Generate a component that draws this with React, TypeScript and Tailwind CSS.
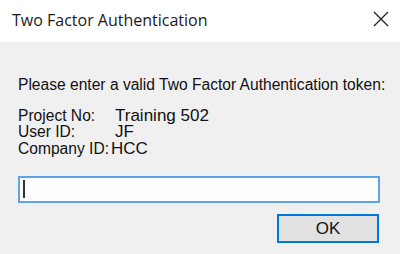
const App = () => {
  return (
    <div className="w-[400px] h-[254px] flex flex-col bg-[#f0f0f0] font-['Liberation_Sans',Arial,sans-serif] text-black overflow-hidden">
      {/* title bar */}
      <div className="h-[42px] shrink-0 bg-white flex items-center justify-between pl-3 pr-[11px]">
        <span className="text-[16px] text-[#1a1a1a] font-['Open_Sans','Noto_Sans',sans-serif] -mt-[2px]">
          Two Factor Authentication
        </span>
        <svg width="16" height="16" viewBox="0 0 16 16" className="-mt-[4px]">
          <path d="M1 1 L15 15 M15 1 L1 15" stroke="#222" strokeWidth="1.3" fill="none" />
        </svg>
      </div>

      <div className="flex-1 flex flex-col px-[18px] pt-[34px]">
        <p className="text-[15.6px] leading-[18px] text-[#111] whitespace-nowrap">
          Please enter a valid Two Factor Authentication token:
        </p>

        <div className="mt-[13px] flex flex-col text-[15.6px] leading-[16px] text-[#111] whitespace-nowrap">
          <div className="flex items-end h-[16.5px]">
            <span className="w-[97px]">Project No:</span>
            <span className="text-[17px]">Training 502</span>
          </div>
          <div className="flex items-end h-[16.5px]">
            <span className="w-[97px]">User ID:</span>
            <span className="text-[17px]">JF</span>
          </div>
          <div className="flex items-end h-[16.5px]">
            <span className="w-[93px]">Company ID:</span>
            <span className="text-[17px]">HCC</span>
          </div>
        </div>

        <div className="mt-[19px] w-[362px] h-[27px] shrink-0 bg-white border-2 border-[#5ea3e6] flex items-center pl-[3px]">
          <div className="w-[2px] h-[18px] bg-[#333]" />
        </div>

        <div className="mt-[11px] flex justify-end pr-[3px]">
          <button className="w-[102px] h-[29px] bg-[#e1e1e1] border-2 border-[#0078d7] text-[17px] text-[#111] leading-none">
            OK
          </button>
        </div>
      </div>
    </div>
  );
};

export default App;
